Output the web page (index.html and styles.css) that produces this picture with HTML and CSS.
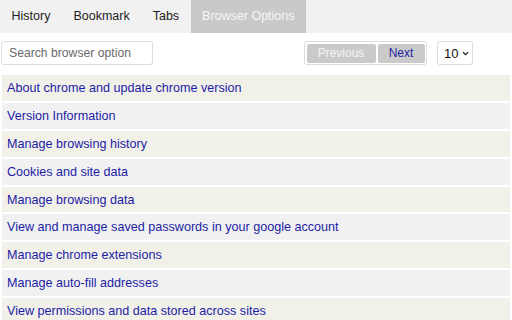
FILE: index.html
```html
<!DOCTYPE html>
<html>
<head>
<meta charset="utf-8">
<link rel="stylesheet" href="styles.css">
</head>
<body>
<div class="tabs">
  <div class="tab">History</div>
  <div class="tab">Bookmark</div>
  <div class="tab">Tabs</div>
  <div class="tab active">Browser Options</div>
</div>
<div class="toolbar">
  <input class="search" type="text" placeholder="Search browser option">
  <div class="spacer"></div>
  <div class="pager">
    <button class="btn prev">Previous</button>
    <button class="btn next">Next</button>
  </div>
  <div class="select"><span>10</span><svg width="7" height="5" viewBox="0 0 7 5"><path d="M1 1.2 L3.5 3.6 L6 1.2" fill="none" stroke="#222" stroke-width="1.2"/></svg></div>
</div>
<table class="list">
  <tr><td>About chrome and update chrome version</td></tr>
  <tr><td>Version Information</td></tr>
  <tr><td>Manage browsing history</td></tr>
  <tr><td>Cookies and site data</td></tr>
  <tr><td>Manage browsing data</td></tr>
  <tr><td>View and manage saved passwords in your google account</td></tr>
  <tr><td>Manage chrome extensions</td></tr>
  <tr><td>Manage auto-fill addresses</td></tr>
  <tr><td>View permissions and data stored across sites</td></tr>
</table>
</body>
</html>
```

FILE: styles.css
```css
html, body {
  margin: 0;
  padding: 0;
  background: #ffffff;
  font-family: "Liberation Sans", Arial, sans-serif;
  overflow: hidden;
}
.tabs {
  display: flex;
  background: #f1f1f1;
  height: 33px;
}
.tab {
  padding: 0 11.5px;
  line-height: 33px;
  font-size: 12.5px;
  color: #1e1e1e;
}
.tab.active {
  background: #c9c9c9;
  color: #f7f7f7;
}
.toolbar {
  display: flex;
  align-items: flex-start;
  height: 40px;
  padding-top: 8px;
  box-sizing: border-box;
}
.search {
  margin: 0 0 0 1px;
  width: 152px;
  height: 24px;
  box-sizing: border-box;
  border: 1px solid #dcdcdc;
  border-radius: 3px;
  padding: 0 7px;
  font-family: "Liberation Sans", Arial, sans-serif;
  font-size: 12.2px;
  outline: none;
}
.search::placeholder {
  color: #6a6a6a;
}
.spacer {
  flex: 1;
}
.pager {
  display: flex;
  gap: 2px;
  padding: 1.5px 1.5px;
  border: 1px solid #dcdcdc;
  border-radius: 3px;
  height: 24px;
  box-sizing: border-box;
}
.btn {
  border: none;
  background: #cacaca;
  border-radius: 2px;
  height: 19px;
  padding: 0;
  font-family: "Liberation Sans", Arial, sans-serif;
  font-size: 12px;
}
.prev {
  width: 69px;
  color: #f4f4f4;
}
.next {
  width: 47px;
  color: #1f1fa0;
}
.select {
  margin: 0 39px 0 10px;
  width: 36px;
  height: 24px;
  box-sizing: border-box;
  border: 1px solid #dcdcdc;
  border-radius: 3px;
  display: flex;
  align-items: center;
  justify-content: space-between;
  padding: 0 3px 0 6px;
  font-size: 13px;
  color: #111;
}
.select svg {
  display: block;
}
.list {
  width: 100%;
  border-collapse: separate;
  border-spacing: 2px;
}
.list td {
  height: 25.9px;
  padding: 0 5px;
  box-sizing: border-box;
  font-size: 12.6px;
  color: #1d1da6;
  background: #f1f1f1;
}
.list tr:nth-child(odd) td {
  background: #f1f0e9;
}
```
